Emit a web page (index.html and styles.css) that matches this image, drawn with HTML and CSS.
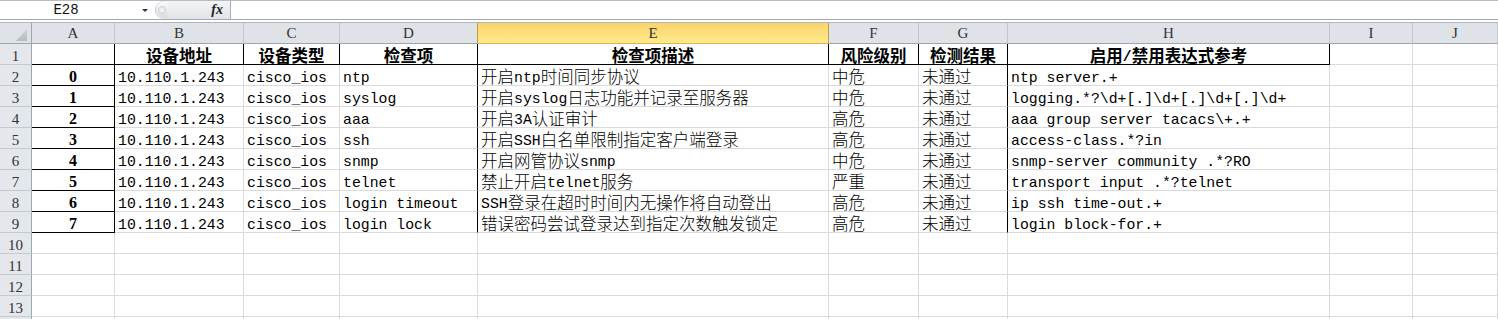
FILE: index.html
```html
<!DOCTYPE html>
<html lang="zh-CN">
<head>
  <meta charset="UTF-8">
  <title>设备检查结果</title>
  <link rel="stylesheet" href="styles.css">
</head>
<body>
  <div class="formula-bar">
    <div class="name-box">
      <span class="name-text">E28</span>
      <span class="name-arrow"></span>
    </div>
    <div class="fx-area">
      <span class="grip"><span class="grip-dot"></span></span>
      <span class="fx">fx</span>
    </div>
    <div class="formula-input"></div>
  </div>

  <div class="sheet" id="sheet"></div>

  <script>
    const letters = ['A', 'B', 'C', 'D', 'E', 'F', 'G', 'H', 'I', 'J'];
    const header = ['', '设备地址', '设备类型', '检查项', '检查项描述', '风险级别', '检测结果', '启用/禁用表达式参考'];
    const rows = [
      ['0', '10.110.1.243', 'cisco_ios', 'ntp', '开启ntp时间同步协议', '中危', '未通过', 'ntp server.+'],
      ['1', '10.110.1.243', 'cisco_ios', 'syslog', '开启syslog日志功能并记录至服务器', '中危', '未通过', 'logging.*?\\d+[.]\\d+[.]\\d+[.]\\d+'],
      ['2', '10.110.1.243', 'cisco_ios', 'aaa', '开启3A认证审计', '高危', '未通过', 'aaa group server tacacs\\+.+'],
      ['3', '10.110.1.243', 'cisco_ios', 'ssh', '开启SSH白名单限制指定客户端登录', '高危', '未通过', 'access-class.*?in'],
      ['4', '10.110.1.243', 'cisco_ios', 'snmp', '开启网管协议snmp', '中危', '未通过', 'snmp-server community .*?RO'],
      ['5', '10.110.1.243', 'cisco_ios', 'telnet', '禁止开启telnet服务', '严重', '未通过', 'transport input .*?telnet'],
      ['6', '10.110.1.243', 'cisco_ios', 'login timeout', 'SSH登录在超时时间内无操作将自动登出', '高危', '未通过', 'ip ssh time-out.+'],
      ['7', '10.110.1.243', 'cisco_ios', 'login lock', '错误密码尝试登录达到指定次数触发锁定', '高危', '未通过', 'login block-for.+']
    ];
    const totalRows = 13;

    function esc(s) {
      return s.replace(/&/g, '&amp;').replace(/</g, '&lt;').replace(/>/g, '&gt;');
    }

    // CJK runs get their own span so they can be sized apart from the mono Latin text
    function wrap(text) {
      return esc(text).replace(/[\u3000-\u9fff\uff00-\uffef]+/g, m => `<span class="zh">${m}</span>`);
    }

    let html = '<div class="corner"><span class="tri"></span></div>';
    letters.forEach(l => {
      let cls = 'col-head';
      if (l === 'D') cls += ' pre-sel';
      if (l === 'E') cls += ' selected';
      html += `<div class="${cls}">${l}</div>`;
    });

    for (let r = 1; r <= totalRows + 1; r++) {
      // the last row only peeks in at the bottom edge, so it gets no label
      html += `<div class="row-head">${r <= totalRows ? r : ''}</div>`;
      for (let c = 0; c < letters.length; c++) {
        let cls = 'cell';
        let text = '';
        if (r === 1) {
          text = header[c] || '';
          if (c === 0) cls += ' edge-right edge-bottom';
          if (c >= 1 && c <= 7) cls += ' head edge-right edge-bottom';
        } else if (r <= 9) {
          text = rows[r - 2][c] || '';
          if (c === 0) cls += ' num edge-right edge-bottom';
          if (c === 3 || c === 6) cls += ' edge-right';
        }
        html += `<div class="${cls}">${wrap(text)}</div>`;
      }
    }

    document.getElementById('sheet').innerHTML = html;
  </script>
</body>
</html>
```

FILE: styles.css
```css
html, body {
  margin: 0;
  background: #ffffff;
  overflow: hidden;
}
body {
  font-family: "Liberation Mono", "Noto Sans CJK SC", monospace;
  color: #000000;
}

/* formula bar */
.formula-bar {
  display: flex;
  height: 20px;
  box-sizing: border-box;
  border-top: 1px solid #b7bcc2;
  border-bottom: 1px solid #a3a9b1;
  margin-bottom: 2px;
}
.name-box {
  width: 155px;
  display: flex;
  align-items: center;
}
.name-text {
  width: 132px;
  text-align: center;
  font-size: 14px;
  line-height: 18px;
  color: #111;
}
.name-arrow {
  margin-left: 10px;
  border-left: 3px solid transparent;
  border-right: 3px solid transparent;
  border-top: 3px solid #333;
}
.fx-area {
  width: 76px;
  display: flex;
  align-items: center;
  justify-content: space-between;
  box-sizing: border-box;
  background: linear-gradient(#f3f4f6, #e1e4e8);
  border-radius: 9px 0 0 9px;
  border-left: 1px solid #c3c8ce;
  border-right: 1px solid #a9aeb5;
}
.grip {
  width: 12px;
  height: 16px;
  display: flex;
  align-items: center;
  justify-content: center;
  border-radius: 8px 0 0 8px;
  background: linear-gradient(#fbfbfc, #dadde1);
}
.grip-dot {
  width: 6px;
  height: 6px;
  border-radius: 50%;
  background: #eef0f2;
  border: 1px solid #c9cdd2;
}
.fx {
  font-family: "Liberation Serif", serif;
  font-style: italic;
  font-weight: bold;
  font-size: 14px;
  color: #222;
  margin-right: 7px;
}
.formula-input {
  flex: 1;
  background: #ffffff;
}

/* sheet grid */
.sheet {
  display: grid;
  grid-template-columns: 32px 83px 129px 96px 138px 351px 90px 89px 322px 83px 85px;
  grid-template-rows: 21px;
  grid-auto-rows: 21px;
  border-top: 1px solid #b1b6bc;
}
.sheet > div {
  box-sizing: border-box;
  white-space: nowrap;
}
.corner {
  background: #dfe3e8;
  border-right: 1px solid #9ea5ad;
  border-bottom: 1px solid #9ea5ad;
  display: flex;
  justify-content: flex-end;
  align-items: flex-end;
  padding: 0 4px 2px 0;
}
.tri {
  width: 11px;
  height: 12px;
  background: linear-gradient(#cfd2d6, #b8bcc1);
  clip-path: polygon(100% 0, 100% 100%, 0 100%);
}
.col-head {
  background: #dfe3e8;
  border-right: 1px solid #c2c7cd;
  border-bottom: 1px solid #9ea5ad;
  text-align: center;
  font-family: "Liberation Serif", serif;
  font-size: 15px;
  line-height: 19px;
  padding-top: 1px;
  color: #333;
}
.col-head.pre-sel {
  border-right-color: #c29b48;
}
.col-head.selected {
  background: linear-gradient(#f9d46c, #ffeb8c);
  border-right-color: #c29b48;
  border-bottom-color: #e0b254;
}
.row-head {
  background: #e4e8ed;
  border-right: 1px solid #9ea5ad;
  border-bottom: 1px solid #c5cad0;
  text-align: center;
  font-family: "Liberation Serif", serif;
  font-size: 15px;
  line-height: 18px;
  padding-top: 3px;
  color: #333;
}
.cell {
  border-right: 1px solid #dadada;
  border-bottom: 1px solid #dadada;
  font-size: 14.8px;
  line-height: 16px;
  padding: 5px 0 0 3px;
}
.cell.edge-right {
  border-right-color: #000000;
}
.cell.edge-bottom {
  border-bottom-color: #000000;
}
.zh {
  font-family: "Noto Sans CJK SC", sans-serif;
  font-size: 16.5px;
  font-weight: 300;
  line-height: 8px;
  vertical-align: -1px;
}
.cell.head {
  text-align: center;
  font-weight: bold;
  padding-left: 0;
}
.cell.head .zh {
  font-weight: bold;
}
.cell.num {
  text-align: center;
  font-family: "Liberation Serif", serif;
  font-weight: bold;
  font-size: 16px;
  padding: 4px 0 0;
}
```
